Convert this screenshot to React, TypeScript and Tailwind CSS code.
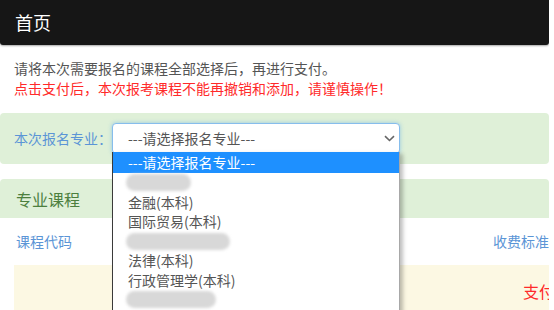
const FONT = '"Noto Sans CJK SC", "Noto Sans", sans-serif';

type Option = { label?: string; blur?: number };

const OPTIONS: Option[] = [
  { blur: 65 },
  { label: '金融(本科)' },
  { label: '国际贸易(本科)' },
  { blur: 104 },
  { label: '法律(本科)' },
  { label: '行政管理学(本科)' },
  { blur: 90 },
];

function Chevron() {
  return (
    <svg width="11" height="7" viewBox="0 0 11 7" fill="none">
      <path d="M1 1.2l4.5 4.3L10 1.2" stroke="#666" strokeWidth="1.6" />
    </svg>
  );
}

function Dropdown() {
  return (
    <div className="absolute left-[112px] top-[152px] w-[288px] h-[170px] bg-white border-l border-l-[#3a3a3a] border-r border-r-[#a8a8a8] shadow-[3px_2px_4px_rgba(0,0,0,0.25)] text-[14px] text-[#555]">
      <div className="h-[21px] leading-[21px] pl-[15px] bg-[#1e90ff] text-white">
        ---请选择报名专业---
      </div>
      {OPTIONS.map((o, i) =>
        o.blur ? (
          <div key={i} className="h-[19.5px] flex items-center pl-[13px]">
            <div
              className="h-[17px] rounded-[9px] bg-[#d8d8d8] blur-[1.5px]"
              style={{ width: o.blur }}
            />
          </div>
        ) : (
          <div key={i} className="h-[19.5px] leading-[19.5px] pl-[15px]">
            {o.label}
          </div>
        ),
      )}
    </div>
  );
}

export default function App() {
  return (
    <div
      className="relative w-[549px] h-[310px] overflow-hidden bg-white"
      style={{ fontFamily: FONT }}
    >
      <div className="h-[45px] bg-[#161616] rounded-b-[3px] shadow-[0_1px_2px_rgba(0,0,0,0.35)] flex items-center px-[15px] text-white text-[18px]">
        首页
      </div>

      <div className="pt-[13px] px-[14px] text-[14px] leading-[20px]">
        <p className="text-[#555]">请将本次需要报名的课程全部选择后，再进行支付。</p>
        <p className="text-[#ff2a2a]">点击支付后，本次报考课程不能再撤销和添加，请谨慎操作！</p>
      </div>

      <div className="mt-[15px] h-[51px] bg-[#dff0d8] rounded-[4px] flex items-center pl-[14px]">
        <span className="w-[98px] text-[14px] text-[#5b95d6]">本次报名专业：</span>
        <div className="w-[288px] h-[31px] bg-white rounded-[4px] border border-[#86bdec] shadow-[0_0_4px_rgba(102,175,233,0.6)] flex items-center justify-between pl-[15px] pr-[4px] text-[14px] text-[#555]">
          <span>---请选择报名专业---</span>
          <Chevron />
        </div>
      </div>

      <div className="mt-[15px] rounded-t-[4px]">
        <div className="h-[39px] bg-[#dff0d8] rounded-t-[4px] flex items-center px-[16px] text-[16px] text-[#4c7f3e]">
          专业课程
        </div>
        <div className="pl-[14px]">
          <div className="h-[47px] flex items-center justify-between pl-[2px] text-[14px] text-[#5b95d6]">
            <span>课程代码</span>
            <span>收费标准</span>
          </div>
          <div className="h-[60px] bg-[#fcf8e3] flex items-start pt-[14px] overflow-hidden">
            <span className="pl-[509px] whitespace-nowrap text-[16px] text-[#ff2a2a]">支付</span>
          </div>
        </div>
      </div>

      <Dropdown />
    </div>
  );
}
